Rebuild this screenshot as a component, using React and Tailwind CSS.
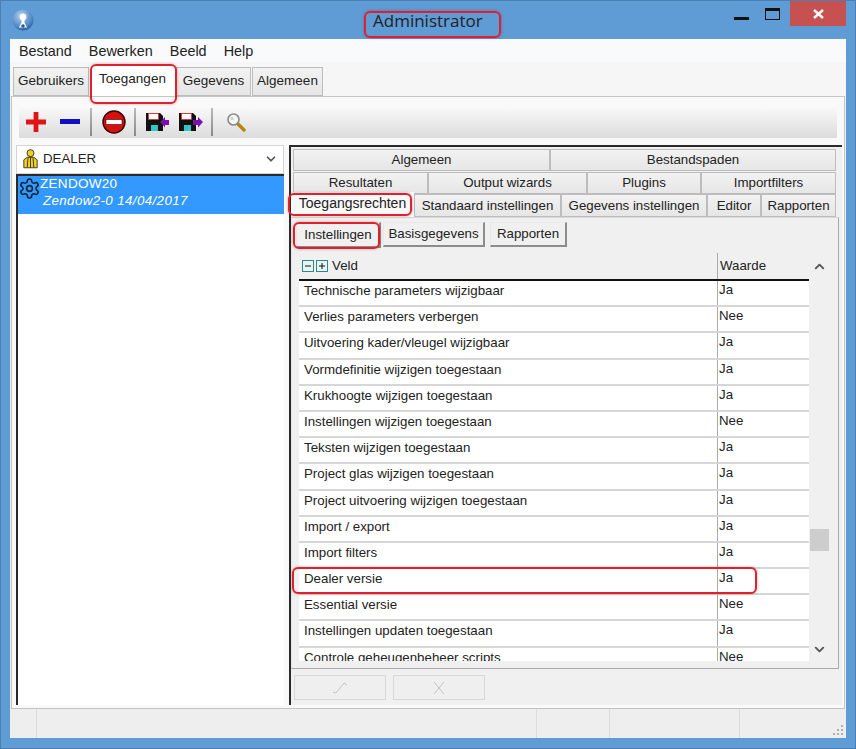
import { ChevronDown, ChevronUp } from 'lucide-react';

const rows = [
  ['Technische parameters wijzigbaar', 'Ja'],
  ['Verlies parameters verbergen', 'Nee'],
  ['Uitvoering kader/vleugel wijzigbaar', 'Ja'],
  ['Vormdefinitie wijzigen toegestaan', 'Ja'],
  ['Krukhoogte wijzigen toegestaan', 'Ja'],
  ['Instellingen wijzigen toegestaan', 'Nee'],
  ['Teksten wijzigen toegestaan', 'Ja'],
  ['Project glas wijzigen toegestaan', 'Ja'],
  ['Project uitvoering wijzigen toegestaan', 'Ja'],
  ['Import / export', 'Ja'],
  ['Import filters', 'Ja'],
  ['Dealer versie', 'Ja'],
  ['Essential versie', 'Nee'],
  ['Instellingen updaten toegestaan', 'Ja'],
  ['Controle geheugenbeheer scripts', 'Nee'],
];

function Tab({ label, className = '' }) {
  return (
    <div className={`flex items-center justify-center border border-[#bdbdbd] bg-gradient-to-b from-[#f2f2f2] to-[#e6e6e6] text-[#222] ${className}`}>
      {label}
    </div>
  );
}

function SubButton({ label, className = '' }) {
  return (
    <div className={`flex items-center justify-center border border-[#e8e8e8] border-r-[#8c8c8c] border-b-[#8c8c8c] border-r-2 border-b-2 bg-[#f0f0f0] text-[#222] ${className}`}>
      {label}
    </div>
  );
}

function Floppy({ dir }) {
  return (
    <svg width="26" height="20" viewBox="0 0 26 20">
      <path d="M1 1h14l3 3v15H1z" fill="#111" />
      <rect x="3.5" y="1.5" width="10" height="6" fill="#fff" stroke="#e22" strokeWidth="0.7" />
      <rect x="6" y="13" width="7" height="6" fill="#35c6c6" />
      {dir === 'left'
        ? <path d="M15 10l5-5v3h4v5h-4v2.5z" fill="#7a10b0" />
        : <path d="M25 10l-5-5v3h-5v5h5v2.5z" fill="#7a10b0" />}
    </svg>
  );
}

function Sep() {
  return <div className="h-[28px] w-[2px] bg-gradient-to-b from-[#bbb] to-[#888]" />;
}

function Red({ className }) {
  return <div className={`absolute z-20 rounded-[6px] border-2 border-[#e0202c] shadow-[0_0_3px_rgba(120,0,0,0.35)] ${className}`} />;
}

export default function App() {
  return (
    <div className="relative flex h-[749px] w-[856px] flex-col overflow-hidden border border-[#4a80b4] bg-[#5f9bd4] font-['Liberation_Sans',sans-serif] text-[13.3px] text-[#222]">
      {/* title bar */}
      <div className="flex h-[38px] shrink-0 items-start">
        <svg className="ml-[11px] mt-[8px]" width="22" height="22" viewBox="0 0 22 22">
          <defs>
            <radialGradient id="orb" cx="0.4" cy="0.3" r="0.8">
              <stop offset="0" stopColor="#b5d0ee" />
              <stop offset="0.7" stopColor="#4a84c4" />
              <stop offset="1" stopColor="#1e4d88" />
            </radialGradient>
          </defs>
          <circle cx="11" cy="11" r="10.5" fill="url(#orb)" />
          <circle cx="11" cy="8" r="3.4" fill="#fff" />
          <path d="M9.5 10h3v3.5l2.5 5h-8l2.5-5z" fill="#fff" />
          <circle cx="11" cy="17" r="1.8" fill="#27568f" />
        </svg>
        <div className="ml-[339px] mt-[7px] w-[110px] whitespace-nowrap font-['Open_Sans',sans-serif] text-[17px] text-[#222]">Administrator</div>
        <svg className="ml-[251px] mt-[16px]" width="15" height="3"><rect width="15" height="3" fill="#111" /></svg>
        <svg className="ml-[16px] mt-[7px]" width="15" height="12"><rect x="0.5" y="0.5" width="14" height="11" fill="none" stroke="#111" /><rect width="15" height="3" fill="#111" /></svg>
        <div className="ml-[10px] flex h-[25px] w-[56px] items-center justify-center bg-[#c75050]">
          <svg width="11" height="10" viewBox="0 0 11 10"><path d="M1 1l9 8M10 1l-9 8" stroke="#fff" strokeWidth="2.4" /></svg>
        </div>
      </div>

      {/* client area */}
      <div className="mx-[9px] flex h-[699px] flex-col bg-[#f0f0f0]">
        <div className="flex h-[23px] shrink-0 items-center gap-[17px] bg-[#f9fafc] pl-[9px] pt-[2px] text-[14.4px]">
          <span>Bestand</span>
          <span>Bewerken</span>
          <span>Beeld</span>
          <span>Help</span>
        </div>

        <div className="flex h-[34px] shrink-0 items-end bg-[#f6f6f6] pl-[3px] text-[13.5px]">
          <Tab label="Gebruikers" className="h-[29px] w-[76px]" />
          <div className="flex h-[32px] w-[87px] items-center justify-center bg-white pb-[2px] text-[#222]">Toegangen</div>
          <Tab label="Gegevens" className="h-[29px] w-[75px]" />
          <Tab label="Algemeen" className="ml-[1px] h-[29px] w-[71px]" />
        </div>

        {/* main panel */}
        <div className="mx-[1px] flex h-[613px] shrink-0 flex-col border border-[#c4c4c4] bg-[#f9f9f9] pb-[3px] pl-[4px] pr-[2px] pt-[8px]">
          <div className="ml-[3px] mr-[5px] flex h-[33px] shrink-0 items-center bg-gradient-to-b from-[#fbfbfb] to-[#dcdcdc]">
            <svg className="ml-[7px]" width="20" height="20" viewBox="0 0 21 21"><path d="M8 0h5v8h8v5h-8v8H8v-8H0V8h8z" fill="#e01414" /></svg>
            <svg className="ml-[14px]" width="20" height="5"><rect width="20" height="5" fill="#1010c0" /></svg>
            <div className="ml-[10px]"><Sep /></div>
            <svg className="ml-[10px]" width="24" height="24" viewBox="0 0 24 24">
              <circle cx="12" cy="12" r="11" fill="#d81010" stroke="#300" strokeWidth="1.4" />
              <rect x="4" y="9.5" width="16" height="5" fill="#fff" stroke="#300" strokeWidth="0.6" />
            </svg>
            <div className="ml-[8px]"><Sep /></div>
            <div className="ml-[9px]"><Floppy dir="left" /></div>
            <div className="ml-[7px]"><Floppy dir="right" /></div>
            <div className="ml-[7px]"><Sep /></div>
            <svg className="ml-[13px]" width="20" height="20" viewBox="0 0 20 20">
              <path d="M12 12l6 6" stroke="#b8860b" strokeWidth="3.4" strokeLinecap="round" />
              <circle cx="7.5" cy="7.5" r="5.5" fill="#f4f6f7" stroke="#8a8a8a" strokeWidth="1.6" />
              <circle cx="6" cy="6.5" r="1.5" fill="#c5ccd0" />
            </svg>
          </div>

          <div className="mt-[7px] flex min-h-0 flex-1">
            {/* left column */}
            <div className="mr-[5px] flex w-[268px] shrink-0 flex-col">
              <div className="flex h-[29px] shrink-0 items-center border border-[#d4d4d4] bg-white pb-[1px] pl-[6px]">
                <svg width="15" height="22" viewBox="0 0 18 24">
                  <circle cx="9" cy="5" r="4.2" fill="#f2d020" stroke="#222" />
                  <path d="M1 22.5V13l4-3h8l4 3v9.5z" fill="#f2d020" stroke="#222" />
                  <path d="M9 10v12.5M6 11l-1 11M12 11l1 11" stroke="#222" />
                </svg>
                <span className="ml-[5px]">DEALER</span>
                <ChevronDown className="ml-auto mr-[5px] text-[#555]" size={14} strokeWidth={3} />
              </div>
              <div className="flex-1 border-l-2 border-t-2 border-[#2a2a2a] bg-white">
                <div className="flex h-[38px] bg-[#3399ff] text-white">
                  <svg className="mt-[1px] shrink-0" width="23" height="23" viewBox="0 0 24 24" fill="none" stroke="#123" strokeWidth="1.6">
                    <circle cx="12" cy="12" r="3" />
                    <path d="M12.2 2h-.4a2 2 0 0 0-2 2v.2a2 2 0 0 1-1 1.7l-.4.3a2 2 0 0 1-2 0l-.2-.1a2 2 0 0 0-2.7.7l-.2.4a2 2 0 0 0 .7 2.7l.2.1a2 2 0 0 1 1 1.7v.5a2 2 0 0 1-1 1.7l-.2.1a2 2 0 0 0-.7 2.7l.2.4a2 2 0 0 0 2.7.7l.2-.1a2 2 0 0 1 2 0l.4.3a2 2 0 0 1 1 1.7v.2a2 2 0 0 0 2 2h.4a2 2 0 0 0 2-2v-.2a2 2 0 0 1 1-1.7l.4-.3a2 2 0 0 1 2 0l.2.1a2 2 0 0 0 2.7-.7l.2-.4a2 2 0 0 0-.7-2.7l-.2-.1a2 2 0 0 1-1-1.7v-.5a2 2 0 0 1 1-1.7l.2-.1a2 2 0 0 0 .7-2.7l-.2-.4a2 2 0 0 0-2.7-.7l-.2.1a2 2 0 0 1-2 0l-.4-.3a2 2 0 0 1-1-1.7V4a2 2 0 0 0-2-2z" />
                  </svg>
                  <div className="-ml-[1px] -mt-[1px] leading-[17px]">
                    <div className="text-[13.5px] tracking-[0.3px]">ZENDOW20</div>
                    <div className="pl-[3px] text-[13.3px] italic tracking-[0.4px]">Zendow2-0 14/04/2017</div>
                  </div>
                </div>
              </div>
            </div>

            {/* right column */}
            <div className="flex w-[553px] shrink-0 flex-col border-l-2 border-t-2 border-[#2a2a2a] bg-[#f0f0f0] pt-[2px]">
              <div className="flex h-[23px] shrink-0 pb-[1px] pl-[2px]">
                <Tab label="Algemeen" className="w-[257px]" />
                <Tab label="Bestandspaden" className="w-[286px]" />
              </div>
              <div className="flex h-[22px] shrink-0 pl-[2px]">
                <Tab label="Resultaten" className="w-[135px]" />
                <Tab label="Output wizards" className="w-[159px]" />
                <Tab label="Plugins" className="w-[114px]" />
                <Tab label="Importfilters" className="w-[135px]" />
              </div>
              <div className="flex h-[23px] shrink-0 items-end">
                <div className="relative z-10 flex h-[25px] w-[123px] items-center justify-center bg-[#f8f8f8] pb-[2px] text-[14px]">Toegangsrechten</div>
                <Tab label="Standaard instellingen" className="h-[23px] w-[147px]" />
                <Tab label="Gegevens instellingen" className="h-[23px] w-[146px]" />
                <Tab label="Editor" className="h-[23px] w-[54px]" />
                <Tab label="Rapporten" className="h-[23px] w-[75px]" />
              </div>

              {/* page */}
              <div className="mr-[3px] flex h-[452px] shrink-0 flex-col border border-[#a8a8a8] border-l-[#e4e4e4] border-t-[#d8d8d8] bg-[#f0f0f0] pl-[4px]">
                <div className="mt-[4px] flex h-[26px] shrink-0 items-start">
                  <SubButton label="Instellingen" className="h-[26px] w-[85px]" />
                  <SubButton label="Basisgegevens" className="ml-[2px] h-[25px] w-[102px]" />
                  <SubButton label="Rapporten" className="ml-[5px] h-[25px] w-[77px]" />
                </div>
                <div className="ml-[3px] mt-[5px] flex h-[408px] w-[531px] overflow-hidden">
                  <div className="w-[510px] shrink-0">
                    <div className="flex h-[28px] border-b-2 border-[#111]">
                      <div className="flex w-[418px] items-center gap-[2px] pl-[3px]">
                        <svg width="12" height="12"><rect x="0.5" y="0.5" width="11" height="11" fill="#e8f4f4" stroke="#2a8a8a" /><path d="M3 6h6" stroke="#111" /></svg>
                        <svg width="12" height="12"><rect x="0.5" y="0.5" width="11" height="11" fill="#e8f4f4" stroke="#2a8a8a" /><path d="M3 6h6M6 3v6" stroke="#111" /></svg>
                        <span className="ml-[2px]">Veld</span>
                      </div>
                      <div className="flex flex-1 items-center border-l border-[#aaa] pl-[2px]">Waarde</div>
                    </div>
                    {rows.map(([veld, waarde]) => (
                      <div key={veld} className="flex h-[26.2px] border-b-2 border-[#d6d6d6] bg-white">
                        <div className="w-[418px] pl-[5px] leading-[20px]">{veld}</div>
                        <div className="flex-1 border-l border-[#aaa] pl-[1px] leading-[18px]">{waarde}</div>
                      </div>
                    ))}
                  </div>
                  <div className="flex flex-1 flex-col items-center pt-[6px]">
                    <ChevronUp className="text-[#555]" size={15} strokeWidth={3} />
                    <div className="mt-[255px] h-[22px] w-[19px] bg-[#cdcdcd]" />
                    <ChevronDown className="mt-[91px] text-[#555]" size={15} strokeWidth={3} />
                  </div>
                </div>
              </div>

              {/* disabled buttons */}
              <div className="flex h-[37px] shrink-0 gap-[7px] pl-[3px] pt-[6px]">
                <div className="flex h-[25px] w-[92px] items-center justify-center border border-[#d8d8d8] bg-[#efefef]">
                  <svg width="16" height="14" viewBox="0 0 16 14" fill="none" stroke="#c4c4c4"><path d="M1 11l3 1 8-10 3 2" /></svg>
                </div>
                <div className="flex h-[25px] w-[92px] items-center justify-center border border-[#d8d8d8] bg-[#efefef]">
                  <svg width="14" height="14" viewBox="0 0 14 14" fill="none" stroke="#c4c4c4"><path d="M2 1l10 12M12 1L2 13" /></svg>
                </div>
              </div>
              <div className="flex-1 bg-[#f9f9f9]" />
            </div>
          </div>
        </div>

        {/* status bar */}
        <div className="relative flex h-[29px] shrink-0 bg-[#eeeeee]">
          <div className="w-[27px] border-r border-[#dcdcdc]" />
          <div className="w-[500px] border-r border-[#dcdcdc]" />
          <div className="w-[73px] border-r border-[#dcdcdc]" />
          <div className="w-[130px] border-r border-[#dcdcdc]" />
          <svg className="absolute bottom-[2px] right-[2px]" width="11" height="11" fill="#b0b0b0">
            <rect x="8" y="0" width="2" height="2" /><rect x="4" y="4" width="2" height="2" /><rect x="8" y="4" width="2" height="2" />
            <rect x="0" y="8" width="2" height="2" /><rect x="4" y="8" width="2" height="2" /><rect x="8" y="8" width="2" height="2" />
          </svg>
        </div>
      </div>

      {/* red callouts drawn over the screenshot */}
      <Red className="left-[363px] top-[10px] h-[27px] w-[137px]" />
      <Red className="left-[89px] top-[63px] h-[40px] w-[87px]" />
      <Red className="left-[287px] top-[192px] h-[23px] w-[124px]" />
      <Red className="left-[292px] top-[221px] h-[27px] w-[87px]" />
      <Red className="left-[291px] top-[566px] h-[27px] w-[465px]" />
    </div>
  );
}
